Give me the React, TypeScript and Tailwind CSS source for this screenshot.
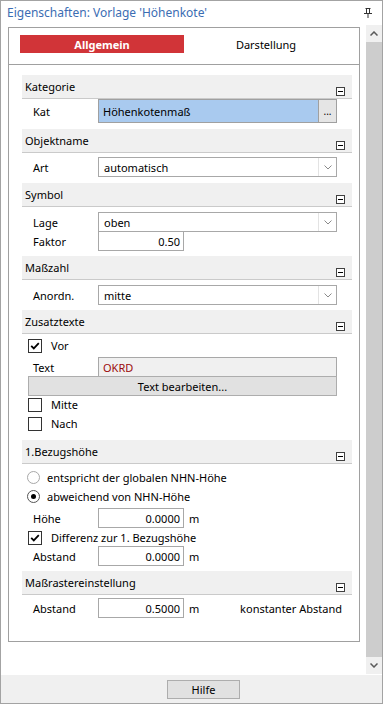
import type { ReactNode } from "react";

function Pin() {
  return (
    <svg width="8" height="10" viewBox="0 0 8 10">
      <path d="M1.5 0.5H6.5M2.5 0.5V5.5M5.5 0.5V5.5M0 5.5H8M4 5.5V10" fill="none" stroke="#333" strokeWidth="1" />
    </svg>
  );
}

function Chevron({ up = false }: { up?: boolean }) {
  return (
    <svg width="8" height="5" viewBox="0 0 8 5">
      <path
        d={up ? "M0.5 4.5L4 1L7.5 4.5" : "M0.5 0.5L4 4L7.5 0.5"}
        fill="none"
        stroke={up ? "#5a5a5a" : "#8a8a8a"}
        strokeWidth={up ? 1.5 : 1}
      />
    </svg>
  );
}

function Header({ title, className = "" }: { title: string; className?: string }) {
  return (
    <div className={`flex h-[24px] shrink-0 justify-between border-b border-[#cacaca] bg-[#f0f0f0] pl-[3px] pr-[7px] ${className}`}>
      <span className="self-center">{title}</span>
      <div className="mb-[2px] flex h-[9px] w-[9px] items-center justify-center self-end border border-[#404040] bg-white">
        <div className="h-px w-[5px] bg-black" />
      </div>
    </div>
  );
}

function Label({ children }: { children: ReactNode }) {
  return <span className="w-[76px] shrink-0 pl-[11px]">{children}</span>;
}

function Select({ value }: { value: string }) {
  return (
    <div className="flex h-[20px] w-[239px] border border-[#a8a8a8] bg-white">
      <div className="flex flex-1 items-center pl-[5px]">{value}</div>
      <div className="flex w-[18px] items-center justify-center border-l border-[#e3e3e3]">
        <Chevron />
      </div>
    </div>
  );
}

function NumberBox({ value }: { value: string }) {
  return (
    <div className="flex h-[20px] w-[86px] items-center justify-end border border-[#a8a8a8] bg-white pr-[3px]">
      {value}
    </div>
  );
}

function Check({ checked = false }: { checked?: boolean }) {
  return (
    <div className="flex h-[14px] w-[14px] shrink-0 items-center justify-center border border-[#333] bg-white">
      {checked && (
        <svg width="10" height="8" viewBox="0 0 10 8">
          <path d="M1.2 3.8L3.8 6.4L8.8 1.2" fill="none" stroke="#000" strokeWidth="1.8" />
        </svg>
      )}
    </div>
  );
}

function Radio({ on = false }: { on?: boolean }) {
  return (
    <div
      className={`flex h-[13px] w-[13px] shrink-0 items-center justify-center rounded-full border bg-white ${
        on ? "border-[#555]" : "border-[#a8a8a8]"
      }`}
    >
      {on && <div className="h-[5px] w-[5px] rounded-full bg-black" />}
    </div>
  );
}

function CheckRow({ label, checked, className = "" }: { label: string; checked?: boolean; className?: string }) {
  return (
    <div className={`flex h-[19px] items-center pl-[6px] ${className}`}>
      <Check checked={checked} />
      <span className="ml-[9px]">{label}</span>
    </div>
  );
}

function RadioRow({ label, on, className = "" }: { label: string; on?: boolean; className?: string }) {
  return (
    <div className={`flex h-[19px] items-center pl-[5px] ${className}`}>
      <Radio on={on} />
      <span className="ml-[7px]">{label}</span>
    </div>
  );
}

export default function App() {
  return (
    <div className="flex h-[704px] w-[383px] flex-col border border-[#a3a3a3] bg-white text-[11px] leading-none text-black [font-family:'Noto_Sans',sans-serif]">
      <div className="flex h-[24px] shrink-0 items-center justify-between pl-[6px] pr-[10px]">
        <span className="text-[12px] text-[#3b6db3]">Eigenschaften: Vorlage 'Höhenkote'</span>
        <Pin />
      </div>

      <div className="flex h-[650px] shrink-0">
        <div className="pl-[7px] pt-[2px]">
          <div className="flex h-[615px] w-[352px] flex-col border border-[#a0a0a0]">
            <div className="flex h-[37px] shrink-0 border-b border-[#a0a0a0] pl-[11px] pt-[7px]">
              <div className="flex h-[18px] w-[164px] items-center justify-center bg-[#d13438] font-bold text-white">
                Allgemein
              </div>
              <div className="flex h-[18px] w-[164px] items-center justify-center">Darstellung</div>
            </div>

            <div className="flex flex-col pl-[13px] pr-[7px] pt-[10px]">
              <Header title="Kategorie" />
              <div className="flex h-[24px] items-center">
                <Label>Kat</Label>
                <div className="flex h-[24px] w-[239px] border border-[#a0a0a0]">
                  <div className="flex flex-1 items-center bg-[#a9caef] pl-[4px]">Höhenkotenmaß</div>
                  <div className="flex w-[18px] items-end justify-center border-l border-[#a0a0a0] bg-[#e5e5e5] pb-[6px] text-[10px]">
                    ...
                  </div>
                </div>
              </div>

              <Header title="Objektname" className="mt-[6px]" />
              <div className="mt-[4px] flex h-[20px] items-center">
                <Label>Art</Label>
                <Select value="automatisch" />
              </div>

              <Header title="Symbol" className="mt-[6px]" />
              <div className="mt-[5px] flex h-[20px] items-center">
                <Label>Lage</Label>
                <Select value="oben" />
              </div>
              <div className="-mt-px flex h-[20px] items-center">
                <Label>Faktor</Label>
                <NumberBox value="0.50" />
              </div>

              <Header title="Maßzahl" className="mt-[5px]" />
              <div className="mt-[5px] flex h-[20px] items-center">
                <Label>Anordn.</Label>
                <Select value="mitte" />
              </div>

              <Header title="Zusatztexte" className="mt-[5px]" />
              <CheckRow label="Vor" checked className="mt-[2px]" />
              <div className="mt-[2px] flex h-[20px] items-center">
                <Label>Text</Label>
                <div className="flex h-[20px] w-[239px] items-center border border-[#a8a8a8] bg-[#f0f0f0] pl-[4px] text-[#9b0a0a]">
                  OKRD
                </div>
              </div>
              <div className="-mt-px ml-[6px] flex h-[20px] w-[309px] items-center justify-center border border-[#adadad] bg-[#e1e1e1]">
                Text bearbeiten...
              </div>
              <CheckRow label="Mitte" className="-mt-px" />
              <CheckRow label="Nach" />

              <Header title="1.Bezugshöhe" className="mt-[7px]" />
              <RadioRow label="entspricht der globalen NHN-Höhe" className="mt-[4px]" />
              <RadioRow label="abweichend von NHN-Höhe" on />
              <div className="mt-[2px] flex h-[20px] items-center">
                <Label>Höhe</Label>
                <NumberBox value="0.0000" />
                <span className="ml-[5px]">m</span>
              </div>
              <CheckRow label="Differenz zur 1. Bezugshöhe" checked />
              <div className="-mt-px flex h-[20px] items-center">
                <Label>Abstand</Label>
                <NumberBox value="0.0000" />
                <span className="ml-[5px]">m</span>
              </div>

              <Header title="Maßrastereinstellung" className="mt-[5px]" />
              <div className="mt-[3px] flex h-[20px] items-center">
                <Label>Abstand</Label>
                <NumberBox value="0.5000" />
                <span className="ml-[5px]">m</span>
                <span className="ml-auto mr-[10px]">konstanter Abstand</span>
              </div>
            </div>
          </div>
        </div>

        <div className="ml-[6px] flex h-[649px] w-[16px] flex-col bg-[#f0f0f0]">
          <div className="flex h-[17px] items-center justify-center">
            <Chevron up />
          </div>
          <div className="flex-1 bg-[#cdcdcd]" />
          <div className="flex h-[17px] items-center justify-center">
            <svg width="8" height="5" viewBox="0 0 8 5">
              <path d="M0.5 0.5L4 4L7.5 0.5" fill="none" stroke="#5a5a5a" strokeWidth="1.5" />
            </svg>
          </div>
        </div>
      </div>

      <div className="flex h-[28px] shrink-0 bg-[#f0f0f0] pl-[166px] pt-[5px]">
        <div className="flex h-[19px] w-[73px] items-center justify-center border border-[#adadad] bg-[#e1e1e1]">
          Hilfe
        </div>
      </div>
    </div>
  );
}
